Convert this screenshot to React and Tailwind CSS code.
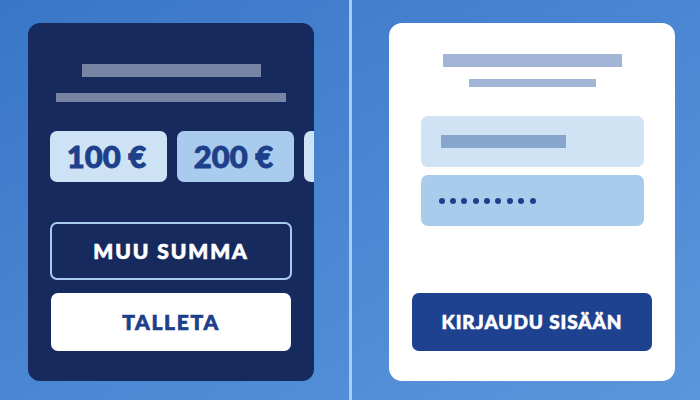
export default function App() {
  const font = { fontFamily: "Lato, 'Noto Sans', sans-serif" };
  const dots = Array.from({ length: 9 });
  return (
    <div
      className="flex w-[700px] h-[400px] overflow-hidden bg-gradient-to-br from-[#3a76c7] via-[#4a86d2] to-[#5b96dc]"
      style={font}
    >
      {/* Deposit panel */}
      <div className="w-[349px] shrink-0 pl-[28px] pt-[23px]">
        <div className="w-[286px] h-[358px] rounded-[12px] bg-[#172a5e] overflow-hidden flex flex-col items-center pt-[41px]">
          <div className="w-[179px] h-[13px] bg-[#7884a4]" />
          <div className="w-[230px] h-[9px] bg-[#7884a4] mt-[16px]" />
          <div className="self-start flex gap-[10px] pl-[22px] mt-[29px]">
            <div className="w-[117px] h-[51px] shrink-0 rounded-[7px] bg-[#cde3f5] flex items-center justify-center pr-[4px] text-[31px] font-black text-[#1e3f8a] [-webkit-text-stroke:0.9px_#1e3f8a]">
              100 €
            </div>
            <div className="w-[117px] h-[51px] shrink-0 rounded-[7px] bg-[#a9cbee] flex items-center justify-center pr-[4px] text-[31px] font-black text-[#1e3f8a] [-webkit-text-stroke:0.9px_#1e3f8a]">
              200 €
            </div>
            <div className="w-[117px] h-[51px] shrink-0 rounded-[7px] bg-[#cde3f5]" />
          </div>
          <div className="w-[242px] h-[58px] mt-[40px] rounded-[7px] border-2 border-[#a9cbee] flex items-center justify-center text-white text-[21px] font-black tracking-[1.9px] [-webkit-text-stroke:0.7px_#ffffff]">
            MUU SUMMA
          </div>
          <div className="w-[240px] h-[58px] mt-[13px] rounded-[7px] bg-white flex items-center justify-center text-[#1e3f8a] text-[21px] font-black tracking-[1.7px] [-webkit-text-stroke:0.7px_#1e3f8a]">
            TALLETA
          </div>
        </div>
      </div>

      <div className="w-[3px] shrink-0 bg-[#a8cdf6]" />

      {/* Login panel */}
      <div className="flex-1 pl-[37px] pt-[23px]">
        <div className="w-[286px] h-[358px] rounded-[13px] bg-white flex flex-col items-center pt-[31px]">
          <div className="w-[179px] h-[13px] bg-[#a3b5d6]" />
          <div className="w-[127px] h-[8px] bg-[#a3b5d6] mt-[12px]" />
          <div className="w-[223px] h-[51px] mt-[29px] rounded-[7px] bg-[#cfe3f5] flex items-center pl-[20px]">
            <div className="w-[125px] h-[13px] bg-[#87a5cd]" />
          </div>
          <div className="w-[223px] h-[51px] mt-[8px] rounded-[7px] bg-[#a9cced] flex items-center gap-[5.4px] pl-[18px]">
            {dots.map((_, i) => (
              <span key={i} className="w-[6px] h-[6px] rounded-full bg-[#1e3f8a]" />
            ))}
          </div>
          <div className="w-[240px] h-[58px] mt-[67px] rounded-[7px] bg-[#1f4290] flex items-center justify-center text-white text-[19px] font-black tracking-[0.9px] [-webkit-text-stroke:0.6px_#ffffff]">
            KIRJAUDU SISÄÄN
          </div>
        </div>
      </div>
    </div>
  );
}
